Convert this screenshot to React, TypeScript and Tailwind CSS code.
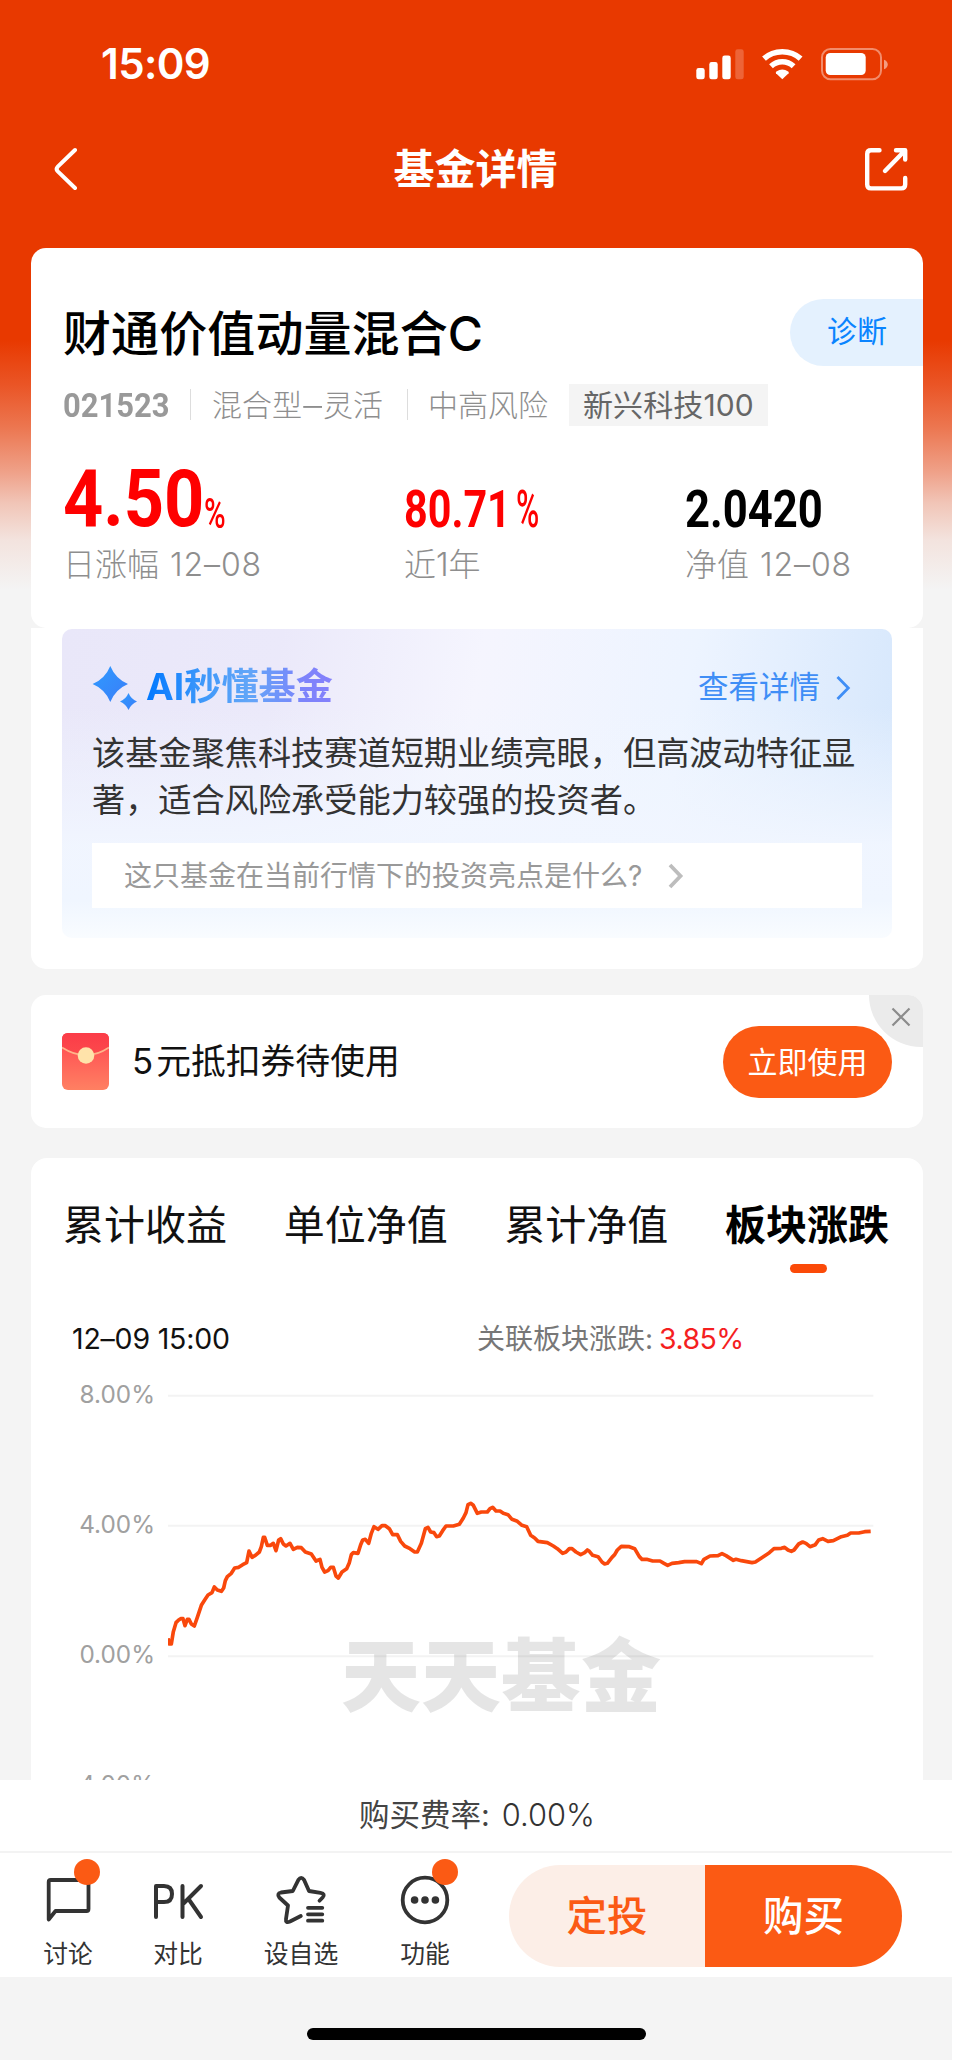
import React from "react";

const line =
  "504,775 508,792 514,792 520,755 528,728 536,720 542,716 549,716 555,737 562,718 567,718 574,732 583,738 592,712 604,676 614,660 624,645 636,638 643,621 652,630 664,634 671,624 676,602 682,590 694,580 704,564 716,562 728,554 740,548 747,513 756,532 766,526 778,516 784,500 790,472 794,472 802,496 812,496 820,490 828,512 836,480 842,476 850,492 858,498 870,490 880,508 892,502 904,503 916,516 934,522 942,534 948,543 960,538 966,562 974,576 984,572 992,562 1000,562 1008,588 1015,594 1026,576 1040,566 1048,548 1054,524 1060,518 1074,520 1082,494 1088,480 1096,478 1106,490 1114,460 1122,440 1134,448 1146,437 1156,437 1168,446 1178,464 1192,464 1202,484 1214,498 1230,506 1244,516 1252,516 1264,490 1276,446 1284,442 1292,456 1302,458 1310,470 1318,468 1328,452 1338,438 1360,438 1378,433 1390,414 1398,398 1404,374 1412,370 1420,376 1432,400 1444,396 1462,396 1470,386 1478,382 1488,393 1500,393 1510,400 1524,404 1536,418 1552,424 1566,436 1580,440 1592,466 1604,474 1614,484 1642,488 1660,498 1672,506 1688,520 1698,516 1708,506 1716,506 1728,516 1742,524 1754,518 1762,510 1768,514 1778,526 1794,530 1806,546 1814,552 1822,550 1836,532 1844,524 1852,510 1864,499 1888,500 1904,506 1918,530 1926,538 1940,538 1958,543 1980,543 1992,550 2003,556 2016,550 2036,548 2054,545 2090,545 2104,551 2112,538 2130,528 2154,527 2166,521 2178,527 2192,536 2200,541 2208,538 2224,542 2256,548 2266,546 2290,530 2308,518 2322,506 2344,505 2354,502 2364,510 2374,514 2382,510 2396,492 2408,486 2418,490 2430,500 2446,494 2456,480 2468,476 2484,484 2500,482 2524,470 2542,466 2552,459 2576,459 2594,455 2612,454";

function StatusBar() {
  return (
    <div className="flex h-[127px] items-center justify-between pl-[101px] pr-[64px]">
      <span className="text-[42px] font-semibold leading-none tracking-[-0.6px] text-white">15:09</span>
      <svg className="h-[34px] w-[192px]" viewBox="696 46 192 34">
        <g fill="#fff">
          <rect x="696.3" y="67" width="8.4" height="11.3" rx="2.4" />
          <rect x="709.3" y="61" width="8.4" height="17.3" rx="2.4" />
          <rect x="722.3" y="54.6" width="8.4" height="23.7" rx="2.4" />
          <rect x="735.3" y="48.3" width="8.4" height="30" rx="2.4" fillOpacity=".22" />
          <path d="M782.3 78.2 L776 72.2 Q775.4 71.3 776.4 70.6 Q782.3 66.6 788.2 70.6 Q789.2 71.3 788.6 72.2 Z" />
          <rect x="825.7" y="52" width="40" height="22" rx="4.5" />
          <path d="M884 58.7 C889 60.5 889 66.5 884 68.3 Z" fillOpacity=".5" />
        </g>
        <g fill="none" stroke="#fff" strokeWidth="5.6">
          <path d="M764 57.6 C774 48.4 790.6 48.4 800.6 57.6" />
          <path d="M771 65.3 C777.6 59.3 787 59.3 793.6 65.3" />
        </g>
        <rect x="822" y="48" width="59" height="30.3" rx="8.5" fill="none" stroke="#fff" strokeOpacity=".42" strokeWidth="2" />
      </svg>
    </div>
  );
}

function TitleBar() {
  return (
    <div className="flex h-[83px] items-center justify-between pl-[53px] pr-[43px]">
      <svg className="h-[46px] w-[44px]" viewBox="53 145 44 46" fill="none">
        <path d="M75 149 L57.8 165.6 Q55.5 168 57.8 170.4 L75 187" stroke="#fff" strokeWidth="4" strokeLinecap="round" />
      </svg>
      <h1 className="mr-[9px] mt-[2px] text-[41px] font-semibold leading-none text-white">基金详情</h1>
      <svg className="h-[46px] w-[46px]" viewBox="863 145 46 46" fill="none" stroke="#fff" strokeWidth="4.4" strokeLinecap="round">
        <path d="M879.5 149.3 H871 Q867.2 149.3 867.2 153 V183.5 Q867.2 187.4 871 187.4 H901.3 Q905.2 187.4 905.2 183.5 V177" />
        <path d="M896 149.3 H905.2 V158.5 M904.5 150 L885 170" strokeLinejoin="round" />
      </svg>
    </div>
  );
}

function StatLabel({ name, date }: { name: string; date?: string }) {
  return (
    <div className="mt-[10px] flex h-[40px] items-center whitespace-nowrap text-[32px] font-light leading-none text-[#8e8e8e]">
      <span>{name}</span>
      {date && <span className="ml-[11px] tracking-[0.9px]">{date}</span>}
    </div>
  );
}

function FundCard() {
  return (
    <section className="ml-[31px] mr-[29px] mt-[38px] h-[380px] rounded-[15px] bg-white">
      <div className="flex h-[134px] items-start justify-between pl-[32px] pt-[51px]">
        <h2 className="mt-[11px] text-[48px] font-semibold leading-none tracking-[0.1px] text-black">
          <span className="font-medium">财通价值动量混合C</span>
        </h2>
        <div className="flex h-[67px] w-[133px] items-center rounded-l-full bg-[#e4f1fe] pb-[3px] pl-[37px] text-[30px] leading-none text-[#0a84ff]">
          诊断
        </div>
      </div>
      <div className="flex h-[45px] items-center pl-[32px] text-[30px] font-light leading-none text-[#8e8e8e]">
        <span className="w-[127px] font-[Roboto] text-[34px] font-bold text-[#999]">
          <span className="inline-block origin-left scale-x-[0.91]">021523</span>
        </span>
        <i className="h-[31px] w-[1px] bg-[#ddd]" />
        <span className="ml-[21px] w-[195px] whitespace-nowrap">
          混合型<span className="mx-[3px] inline-block scale-x-125">–</span>灵活
        </span>
        <i className="h-[31px] w-[1px] bg-[#ddd]" />
        <span className="ml-[20px] w-[141px] whitespace-nowrap">中高风险</span>
        <span className="flex h-[42px] w-[199px] items-center bg-[#f4f4f4] pl-[14px] font-normal tracking-[0.1px] text-[#666]">
          新兴科技100
        </span>
      </div>
      <div className="flex pl-[32px] pt-[22px]">
        <div className="w-[341px]">
          <div className="flex h-[86px] items-end font-[Roboto] font-bold leading-none text-[#fe0000]">
            <span className="mb-[-4px] w-[141px] origin-left scale-x-[0.89] text-[79px]">4.50</span>
            <span className="inline-block origin-left scale-x-[0.7] text-[42px] font-medium">%</span>
          </div>
          <StatLabel name="日涨幅" date="12–08" />
        </div>
        <div className="w-[281px]">
          <div className="flex h-[86px] items-end font-[Roboto] text-[51px] font-bold leading-none text-[#fe0000]">
            <span className="w-[112px] origin-left scale-x-[0.81]">80.71</span>
            <span className="origin-left scale-x-[0.62] font-medium">%</span>
          </div>
          <StatLabel name="近1年" />
        </div>
        <div>
          <div className="flex h-[86px] items-end font-[Roboto] text-[51px] font-bold leading-none text-black">
            <span className="origin-left scale-x-[0.855]">2.0420</span>
          </div>
          <StatLabel name="净值" date="12–08" />
        </div>
      </div>
    </section>
  );
}

function AiPanel() {
  return (
    <section className="ml-[31px] mr-[29px] h-[341px] rounded-b-[15px] bg-white px-[31px] pt-px">
      <div className="h-[309px] rounded-[10px] bg-[linear-gradient(180deg,transparent_0%,transparent_25%,rgba(241,246,255,0.95)_70%,#f0f6ff_88%,#f9fcff_100%),linear-gradient(100deg,#e9e7f9_0%,#ebe9fa_25%,#f5f5fe_48%,#edf4ff_72%,#d4e6fc_100%)] px-[30px]">
        <div className="flex h-[100px] items-center pt-[17px]">
          <svg className="h-[46px] w-[46px]" viewBox="92 669 46 46">
            <defs>
              <linearGradient id="spark" x1="0" y1="0" x2="1" y2="1">
                <stop offset="0" stopColor="#2f9bff" />
                <stop offset="1" stopColor="#3a7df8" />
              </linearGradient>
            </defs>
            <path d="M110.3 670 Q115.5 682.8 128 688 Q115.5 693.2 110.3 706 Q105.1 693.2 92.6 688 Q105.1 682.8 110.3 670 Z" fill="url(#spark)" />
            <path d="M128.5 697 Q131 703 137 705.5 Q131 708 128.5 714 Q126 708 120 705.5 Q126 703 128.5 697 Z" fill="url(#spark)" />
          </svg>
          <span className="ml-[8px] bg-[linear-gradient(90deg,#0078ff_0%,#3e98fa_30%,#62a6f8_55%,#7d83fb_85%,#8580fb_100%)] bg-clip-text text-[37.2px] font-bold leading-[1.2] text-transparent">
            AI秒懂基金
          </span>
          <span className="ml-auto text-[30.5px] leading-none text-[#3f8ef6]">查看详情</span>
          <svg className="ml-[14px] mr-[10px] h-[28px] w-[18px]" viewBox="834 674 18 28" fill="none">
            <path d="M837.5 677 L848.3 688 L837.5 699" stroke="#3f8ef6" strokeWidth="2.8" />
          </svg>
        </div>
        <p className="w-[790px] pt-px text-[33.2px] leading-[46.7px] text-[#333]">
          该基金聚焦科技赛道短期业绩亮眼，但高波动特征显
          <br />
          著，适合风险承受能力较强的投资者。
        </p>
        <div className="mt-[20px] flex h-[65px] w-[770px] items-center bg-white pl-[32px] text-[28px] leading-none text-[#999]">
          这只基金在当前行情下的投资亮点是什么?
          <svg className="ml-[25px] h-[28px] w-[18px]" viewBox="0 0 18 28" fill="none">
            <path d="M3 3 L13.5 14 L3 25" stroke="#bdbdbd" strokeWidth="3.8" />
          </svg>
        </div>
      </div>
    </section>
  );
}

function Coupon() {
  return (
    <section className="relative ml-[31px] mr-[29px] mt-[26px] flex h-[133px] items-center overflow-hidden rounded-[15px] bg-white pl-[31px] pr-[31px]">
      <svg className="h-[57px] w-[47px]" viewBox="0 0 47 57">
        <defs>
          <linearGradient id="env" x1="0" y1="0" x2="0" y2="1">
            <stop offset="0" stopColor="#ff4550" />
            <stop offset="1" stopColor="#ff8062" />
          </linearGradient>
          <linearGradient id="flap" x1="0" y1="0" x2="0" y2="1">
            <stop offset="0" stopColor="#fb3c48" />
            <stop offset="1" stopColor="#fc4a4c" />
          </linearGradient>
        </defs>
        <rect width="47" height="57" rx="6" fill="url(#env)" />
        <path d="M0 14.5 V6 Q0 0 6 0 H41 Q47 0 47 6 V14.5 Q24 30 0 14.5 Z" fill="url(#flap)" />
        <path d="M0 14.5 Q24 30 47 14.5" fill="none" stroke="#ffb48a" strokeWidth="1.8" />
        <circle cx="24" cy="22.5" r="8.3" fill="#ffe3aa" />
      </svg>
      <span className="ml-[23px] text-[34.8px] leading-none text-[#111]">
        <span className="mr-[3px]">5</span>元抵扣券待使用
      </span>
      <button className="ml-auto h-[72px] w-[169px] rounded-full bg-[#fb5a14] text-[30px] leading-none text-white">立即使用</button>
      <div className="absolute right-0 top-0 flex h-[52px] w-[54px] items-start rounded-bl-[52px] bg-[#ebebeb] pl-[22px] pt-[12px]">
        <svg className="h-[20px] w-[20px]" viewBox="0 0 20 20">
          <path d="M1.5 1.5 L18.5 18.5 M18.5 1.5 L1.5 18.5" stroke="#8c8c8c" strokeWidth="2.2" />
        </svg>
      </div>
    </section>
  );
}

function ChartCard() {
  const tabs = ["累计收益", "单位净值", "累计净值"];
  return (
    <section className="ml-[31px] mr-[29px] mt-[30px] h-[622px] shrink-0 overflow-hidden rounded-t-[16px] bg-white">
      <div className="flex h-[134px] items-center pl-[32px] text-[41px] leading-none text-[#111]">
        {tabs.map((t) => (
          <span key={t} className="w-[220.7px]">{t}</span>
        ))}
        <span className="font-bold text-black">板块涨跌</span>
      </div>
      <div className="ml-[759px] mt-[-28px] h-[9px] w-[37px] rounded-full bg-[#fb4a08]" />
      <div className="mt-[50px] flex h-[32px] items-center pl-[41px] text-[28.5px] leading-none text-[#111]">
        <span className="w-[405px] tracking-[-0.2px]">12–09 15:00</span>
        <span className="text-[28px] text-[#777]">关联板块涨跌:</span>
        <span className="ml-[6px] tracking-[-0.6px] text-[#f51f1f]">3.85%</span>
      </div>
      <div className="relative mt-[25px] flex">
        <div className="flex w-[124px] flex-col gap-[102px] text-right text-[24.3px] leading-[28px] text-[#a0a0a0]">
          <span>8.00%</span>
          <span>4.00%</span>
          <span>0.00%</span>
          <span>-4.00%</span>
        </div>
        <svg className="ml-[13px] h-[400px] w-[706px]" viewBox="504 0 2118 1200" fill="none">
          <path d="M504 47 H2620 M504 437 H2620 M504 829 H2620" stroke="#f3f3f3" strokeWidth="6" />
          <polyline points={line} stroke="#f9480c" strokeWidth="11" strokeLinejoin="round" />
        </svg>
        <span className="absolute left-[310px] top-[256px] whitespace-nowrap text-[80px] font-black leading-none text-[#000]/10">
          天天基金
        </span>
      </div>
    </section>
  );
}

const dot = "absolute h-[26px] w-[26px] rounded-full bg-[#fb5a14]";

function BottomBar() {
  return (
    <footer className="shrink-0 bg-white">
      <div className="flex h-[71px] items-center pl-[359px] text-[30.5px] leading-none text-[#444]">
        <span>购买费率:</span>
        <span className="ml-[12px] text-[30.8px] font-light text-[#333]">0.00%</span>
      </div>
      <div className="flex h-[126px] border-t-2 border-[#f3f3f3] text-[24.8px] leading-none text-[#333]">
        <div className="relative flex w-[136px] flex-col items-center pt-[22px]">
          <svg className="h-[50px] w-[50px]" viewBox="42 1874 50 50" fill="none">
            <path d="M47.7 1918.5 V1881 Q47.7 1879 49.7 1879 H85.5 Q87.5 1879 87.5 1881 V1908 Q87.5 1910 85.5 1910 H54.5 Z" stroke="#333" strokeWidth="3.8" strokeLinejoin="round" />
          </svg>
          <span className="mt-[17px]">讨论</span>
          <i className={`${dot} left-[74px] top-[6px]`} />
        </div>
        <div className="flex w-[84px] flex-col items-center pt-[22px]">
          <svg className="h-[50px] w-[54px]" viewBox="151 1874 54 50" fill="none" stroke="#333" strokeWidth="4" strokeLinecap="round" strokeLinejoin="round">
            <path d="M156 1916 V1885 H164 Q172 1885 172 1893 Q172 1901 164 1901 H156" />
            <path d="M182.5 1885 V1916 M201 1885 L183.5 1902.5 M188.5 1898 L201 1916" />
          </svg>
          <span className="mt-[17px]">对比</span>
        </div>
        <div className="flex w-[162px] flex-col items-center pt-[22px]">
          <svg className="h-[50px] w-[54px]" viewBox="275 1873.5 54 50" fill="none" stroke="#333" strokeWidth="3.8" strokeLinecap="round" strokeLinejoin="round">
            <path d="M301.8 1914.5 L291 1920 Q286.3 1922 287 1917.5 L289 1904 L280.3 1896 Q277.5 1892 282 1891 L293.8 1889.5 L299.4 1878.3 Q302.2 1874.3 305 1878.3 L310 1889.5 L321.5 1891.3 Q326.8 1892.3 323.6 1896 L320.5 1899.2" />
            <path d="M309 1906.3 H323.3 M309 1912.8 H323.3 M309 1919.2 H323.3" />
          </svg>
          <span className="mt-[17px]">设自选</span>
        </div>
        <div className="relative flex w-[86px] flex-col items-center pt-[22px]">
          <svg className="h-[50px] w-[50px]" viewBox="0 0 50 50" fill="none">
            <circle cx="25" cy="25" r="22.3" stroke="#333" strokeWidth="3.8" />
            <g fill="#333">
              <circle cx="14.6" cy="25" r="3.8" />
              <circle cx="25" cy="25" r="3.8" />
              <circle cx="35.4" cy="25" r="3.8" />
            </g>
          </svg>
          <span className="mt-[17px]">功能</span>
          <i className={`${dot} left-[50px] top-[6px]`} />
        </div>
        <div className="ml-[41px] mt-[12px] flex h-[102px] text-[40.5px] font-medium leading-none">
          <button className="w-[196px] rounded-l-full bg-[#fceee7] pt-[2px] text-[#fb5a14]">定投</button>
          <button className="w-[197px] rounded-r-full bg-[#fb5a14] pt-[2px] text-white">购买</button>
        </div>
      </div>
      <div className="flex h-[83px] justify-center bg-[#f4f4f4] pt-[51px]">
        <div className="h-[12px] w-[339px] rounded-full bg-black" />
      </div>
    </footer>
  );
}

export default function App() {
  return (
    <main className="h-[2060px] w-[952px] overflow-hidden bg-[#f4f4f4] bg-[linear-gradient(180deg,#e83900_0px,#e83900_340px,#ea5526_385px,#ec7650_427px,#efa28a_473px,#f1c5b7_503px,#f3e3de_540px,#f4f4f4_590px)] font-[Inter,'Noto_Sans_CJK_SC',sans-serif]">
      <StatusBar />
      <TitleBar />
      <FundCard />
      <AiPanel />
      <Coupon />
      <ChartCard />
      <BottomBar />
    </main>
  );
}
